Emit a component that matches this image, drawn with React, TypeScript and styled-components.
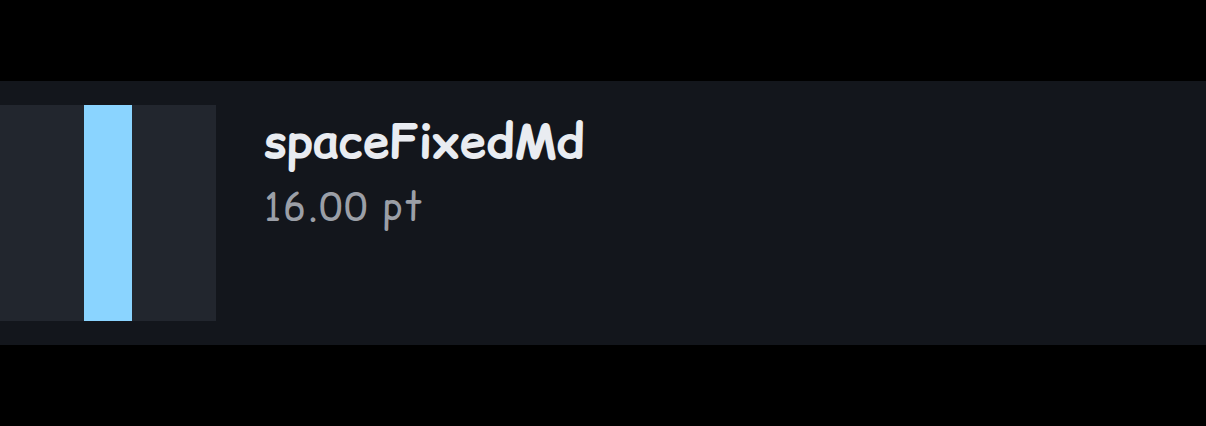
import React from "react";
import styled, { createGlobalStyle } from "styled-components";

const Global = createGlobalStyle`
  html, body { margin: 0; padding: 0; background: #000; }
  body { font-family: "Comic Relief", "Comic Neue", "Comic Sans MS", cursive, sans-serif; }
`;

const Page = styled.div`
  width: 1206px;
  height: 426px;
  background: #000;
  padding-top: 81px;
  box-sizing: border-box;
`;

const Row = styled.div`
  height: 264px;
  background: #13161c;
  display: flex;
  align-items: center;
  gap: 48px;
`;

const Swatch = styled.div`
  width: 216px;
  height: 216px;
  background: #22262e;
  display: flex;
  padding-left: 84px;
  box-sizing: border-box;
`;

const Bar = styled.div<{ $w: number }>`
  width: ${(p) => p.$w}px;
  height: 100%;
  background: #8ad4ff;
`;

const Info = styled.div`
  align-self: flex-start;
  padding-top: 31px;
  display: flex;
  flex-direction: column;
`;

const Title = styled.div`
  color: #e9ecf1;
  font-size: 47.5px;
  font-weight: 700;
  line-height: 58px;
`;

const Sub = styled.div`
  color: #9b9fa7;
  font-size: 38px;
  letter-spacing: 1.8px;
  line-height: 46px;
  margin-top: 14px;
`;

export default function App() {
  return (
    <>
      <Global />
      <Page>
        <Row>
          <Swatch>
            <Bar $w={48} />
          </Swatch>
          <Info>
            <Title>spaceFixedMd</Title>
            <Sub>16.00 pt</Sub>
          </Info>
        </Row>
      </Page>
    </>
  );
}
